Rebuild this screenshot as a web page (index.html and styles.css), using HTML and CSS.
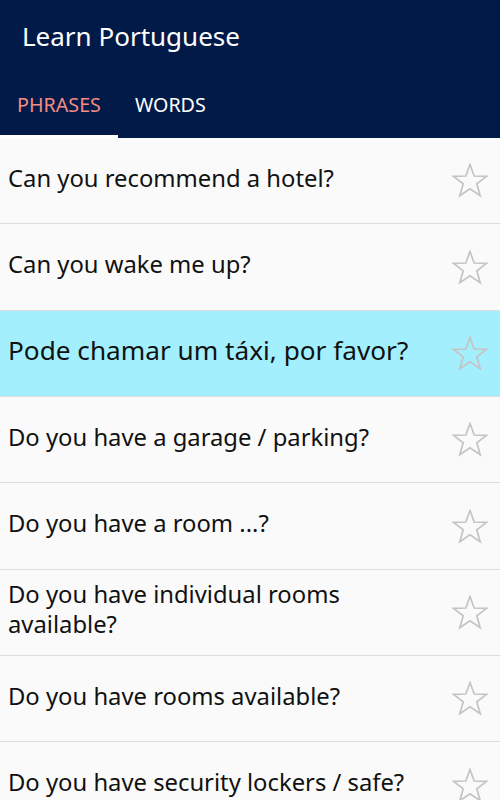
FILE: index.html
```html
<html>
  <head>
    <title>Learn Portuguese</title>
    <link rel="stylesheet" href="styles.css">
  </head>
  <body>
    <div id="header">
      <div class="toolbar">Learn Portuguese</div>
      <div class="tabs">
        <span class="tab active">PHRASES</span>
        <span class="tab">WORDS</span>
      </div>
    </div>

    <div id="list">
      <div class="row"><span class="text">Can you recommend a hotel?</span><span class="star"><svg viewBox="0 0 36 35" width="36" height="35"><polygon points="18,1.5 22.2,13 34.5,13.3 24.8,20.8 28.2,32.8 18,25.8 7.8,32.8 11.2,20.8 1.5,13.3 13.8,13"/></svg></span></div>
      <div class="row"><span class="text">Can you wake me up?</span><span class="star"><svg viewBox="0 0 36 35" width="36" height="35"><polygon points="18,1.5 22.2,13 34.5,13.3 24.8,20.8 28.2,32.8 18,25.8 7.8,32.8 11.2,20.8 1.5,13.3 13.8,13"/></svg></span></div>
      <div class="row selected"><span class="text">Pode chamar um táxi, por favor?</span><span class="star"><svg viewBox="0 0 36 35" width="36" height="35"><polygon points="18,1.5 22.2,13 34.5,13.3 24.8,20.8 28.2,32.8 18,25.8 7.8,32.8 11.2,20.8 1.5,13.3 13.8,13"/></svg></span></div>
      <div class="row"><span class="text">Do you have a garage / parking?</span><span class="star"><svg viewBox="0 0 36 35" width="36" height="35"><polygon points="18,1.5 22.2,13 34.5,13.3 24.8,20.8 28.2,32.8 18,25.8 7.8,32.8 11.2,20.8 1.5,13.3 13.8,13"/></svg></span></div>
      <div class="row"><span class="text">Do you have a room ...?</span><span class="star"><svg viewBox="0 0 36 35" width="36" height="35"><polygon points="18,1.5 22.2,13 34.5,13.3 24.8,20.8 28.2,32.8 18,25.8 7.8,32.8 11.2,20.8 1.5,13.3 13.8,13"/></svg></span></div>
      <div class="row"><span class="text">Do you have individual rooms available?</span><span class="star"><svg viewBox="0 0 36 35" width="36" height="35"><polygon points="18,1.5 22.2,13 34.5,13.3 24.8,20.8 28.2,32.8 18,25.8 7.8,32.8 11.2,20.8 1.5,13.3 13.8,13"/></svg></span></div>
      <div class="row"><span class="text">Do you have rooms available?</span><span class="star"><svg viewBox="0 0 36 35" width="36" height="35"><polygon points="18,1.5 22.2,13 34.5,13.3 24.8,20.8 28.2,32.8 18,25.8 7.8,32.8 11.2,20.8 1.5,13.3 13.8,13"/></svg></span></div>
      <div class="row"><span class="text">Do you have security lockers / safe?</span><span class="star"><svg viewBox="0 0 36 35" width="36" height="35"><polygon points="18,1.5 22.2,13 34.5,13.3 24.8,20.8 28.2,32.8 18,25.8 7.8,32.8 11.2,20.8 1.5,13.3 13.8,13"/></svg></span></div>
    </div>
  </body>
</html>
```

FILE: styles.css
```css
body {
    margin: 0;
    background: #fafafa;
    font-family: "Noto Sans", "Open Sans", sans-serif;
    overflow: hidden;
}
#header {
    background: #011a47;
    color: #ffffff;
    height: 138px;
}
.toolbar {
    height: 74px;
    line-height: 72px;
    padding-left: 22px;
    font-size: 26px;
}
.tabs {
    display: flex;
    height: 64px;
}
.tab {
    display: flex;
    align-items: center;
    padding: 0 17px;
    font-size: 19.7px;
    border-bottom: 3px solid transparent;
}
.tab.active {
    color: #f58a86;
    border-bottom-color: #ffffff;
}
.row {
    display: flex;
    align-items: center;
    min-height: 85.35px;
    border-bottom: 1px solid #dddddd;
    padding-left: 8px;
}
.row.selected {
    background: #a3effd;
}
.text {
    flex: 1;
    max-width: 420px;
    font-size: 23.8px;
    line-height: 30px;
    color: #111111;
    padding-bottom: 6px;
}
.selected .text {
    font-size: 26.2px;
}
.star {
    margin-left: auto;
    width: 60px;
    display: flex;
    justify-content: center;
    padding-left: 4px;
}
.star svg {
    fill: none;
    stroke: #c4c4c4;
    stroke-width: 1.7;
    stroke-linejoin: miter;
}
```
